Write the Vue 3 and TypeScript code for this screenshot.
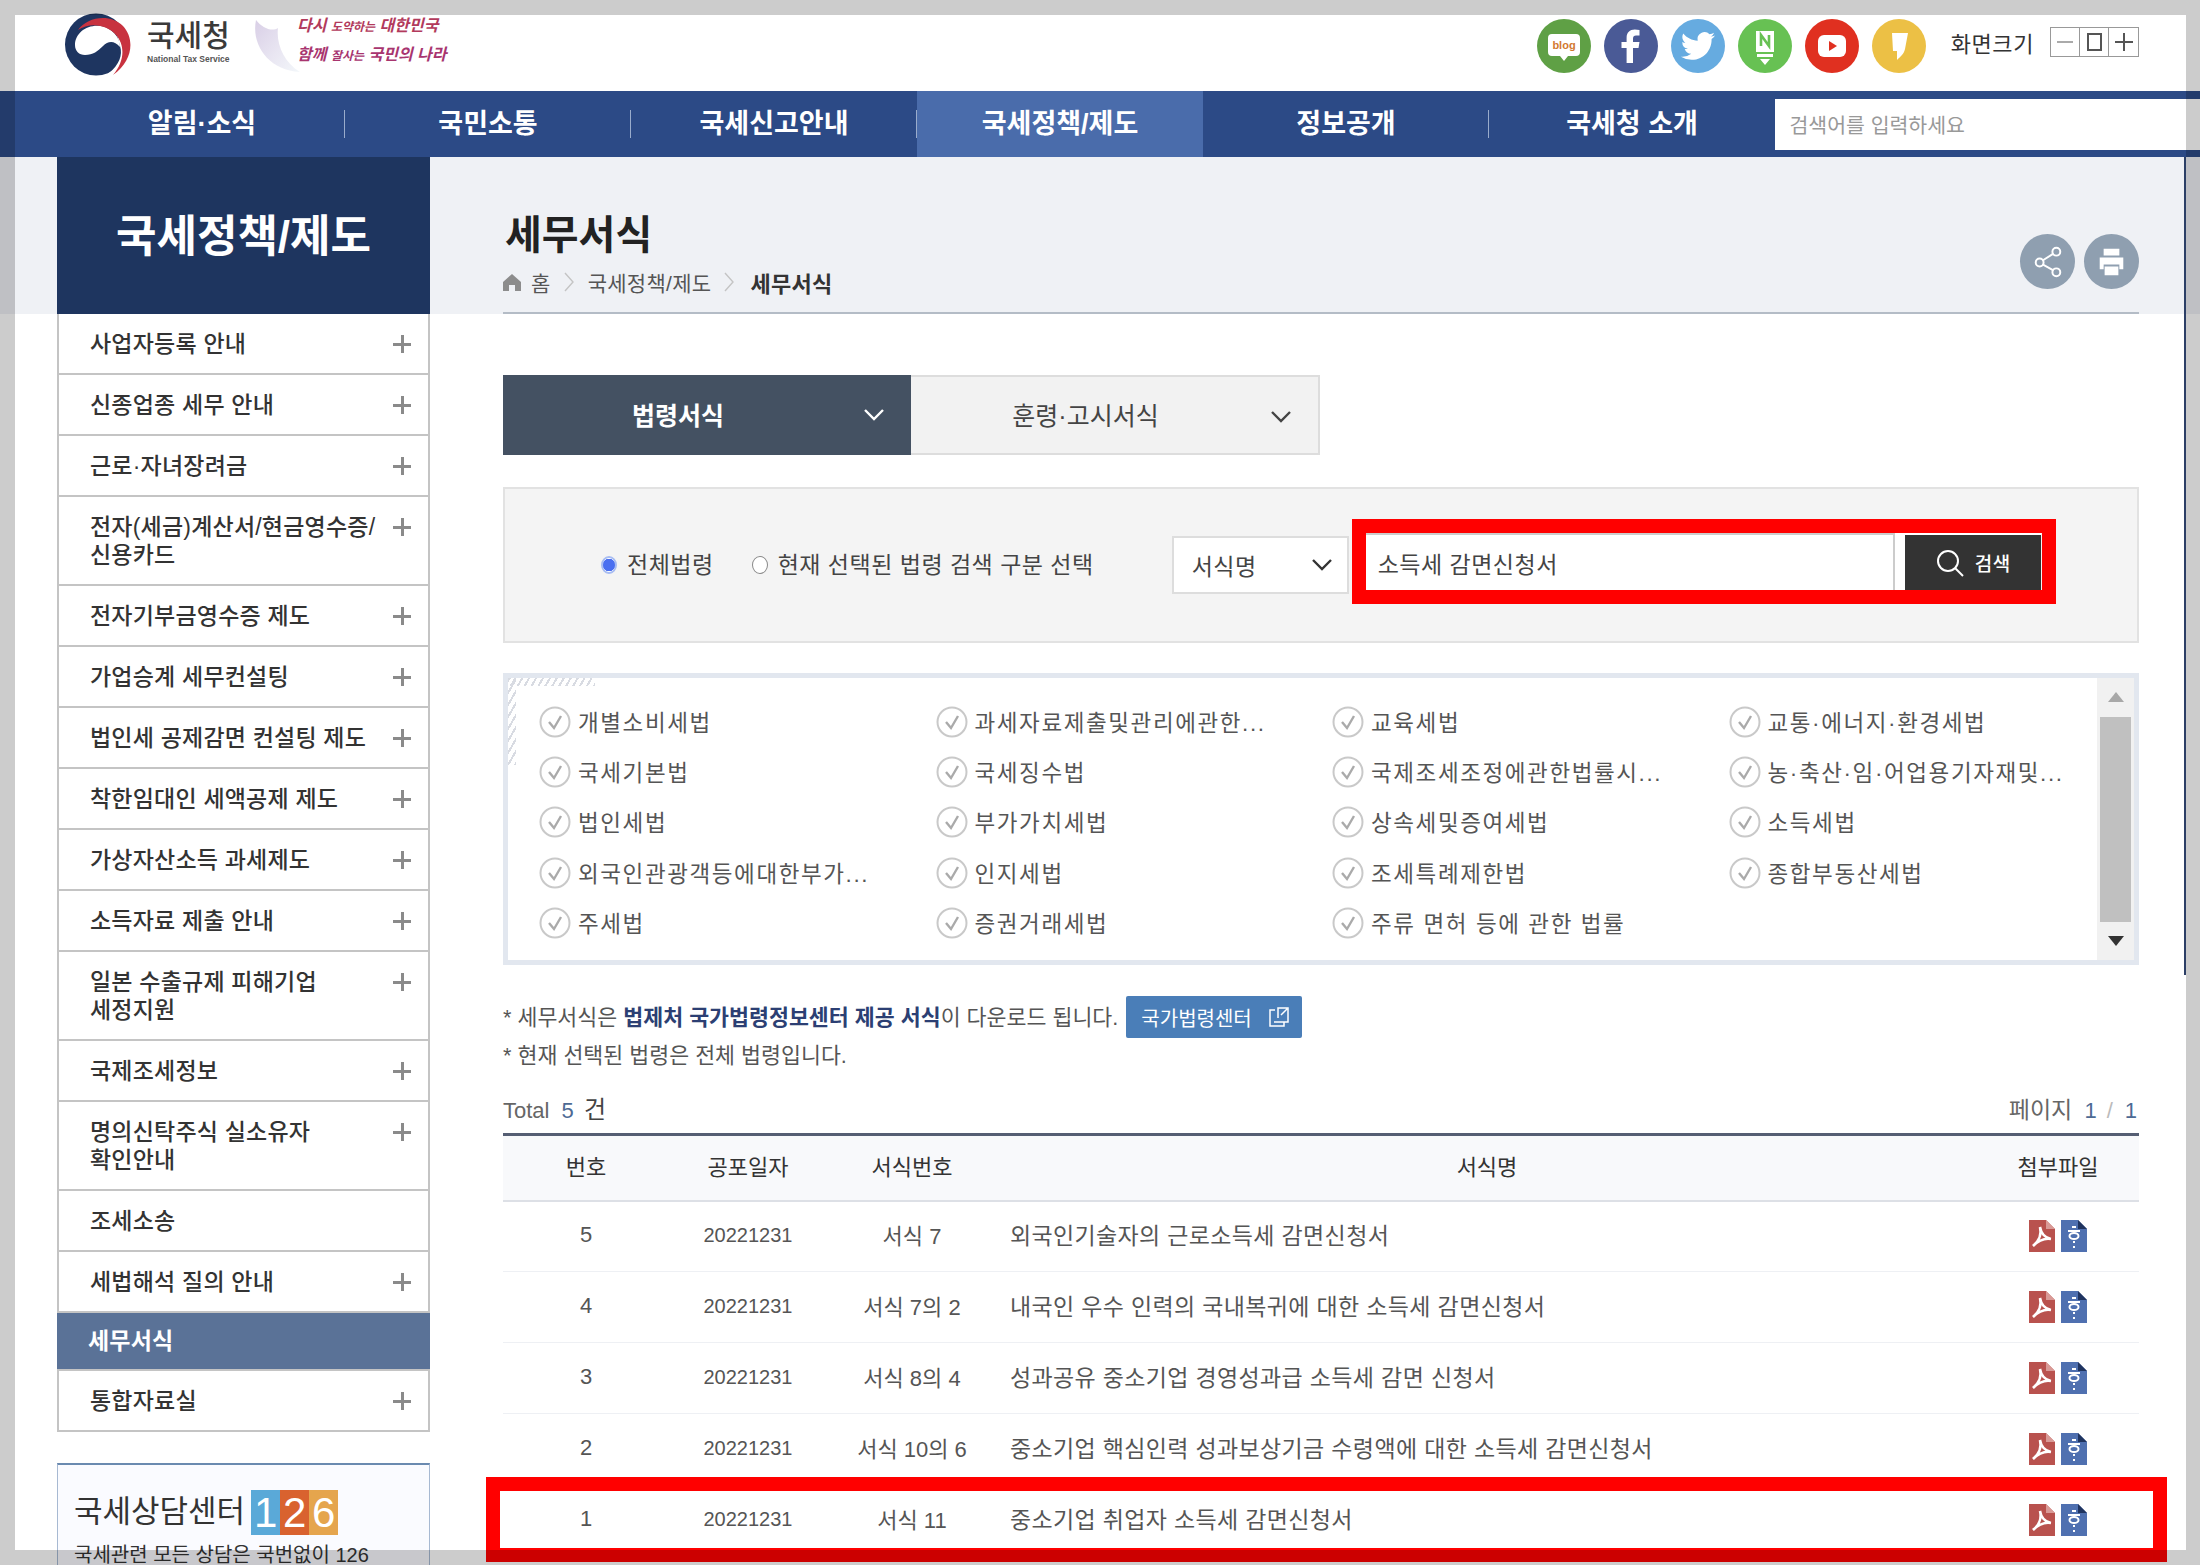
<script setup lang="ts">
type MenuItem = { label: string; plus?: boolean; active?: boolean }
type FormRow = { no: number; date: string; code: string; title: string }

const NAV = ['알림·소식', '국민소통', '국세신고안내', '국세정책/제도', '정보공개', '국세청 소개']
const ACTIVE_NAV = '국세정책/제도'

const MENU: MenuItem[] = [
  { label: '사업자등록 안내', plus: true },
  { label: '신종업종 세무 안내', plus: true },
  { label: '근로·자녀장려금', plus: true },
  { label: '전자(세금)계산서/현금영수증/\n신용카드', plus: true },
  { label: '전자기부금영수증 제도', plus: true },
  { label: '가업승계 세무컨설팅', plus: true },
  { label: '법인세 공제감면 컨설팅 제도', plus: true },
  { label: '착한임대인 세액공제 제도', plus: true },
  { label: '가상자산소득 과세제도', plus: true },
  { label: '소득자료 제출 안내', plus: true },
  { label: '일본 수출규제 피해기업\n세정지원', plus: true },
  { label: '국제조세정보', plus: true },
  { label: '명의신탁주식 실소유자\n확인안내', plus: true },
  { label: '조세소송' },
  { label: '세법해석 질의 안내', plus: true },
  { label: '세무서식', active: true },
  { label: '통합자료실', plus: true },
]

const LAWS = [
  '개별소비세법',
  '과세자료제출및관리에관한...',
  '교육세법',
  '교통·에너지·환경세법',
  '국세기본법',
  '국세징수법',
  '국제조세조정에관한법률시...',
  '농·축산·임·어업용기자재및...',
  '법인세법',
  '부가가치세법',
  '상속세및증여세법',
  '소득세법',
  '외국인관광객등에대한부가...',
  '인지세법',
  '조세특례제한법',
  '종합부동산세법',
  '주세법',
  '증권거래세법',
  '주류 면허 등에 관한 법률',
]

const ROWS: FormRow[] = [
  { no: 5, date: '20221231', code: '서식 7', title: '외국인기술자의 근로소득세 감면신청서' },
  { no: 4, date: '20221231', code: '서식 7의 2', title: '내국인 우수 인력의 국내복귀에 대한 소득세 감면신청서' },
  { no: 3, date: '20221231', code: '서식 8의 4', title: '성과공유 중소기업 경영성과급 소득세 감면 신청서' },
  { no: 2, date: '20221231', code: '서식 10의 6', title: '중소기업 핵심인력 성과보상기금 수령액에 대한 소득세 감면신청서' },
  { no: 1, date: '20221231', code: '서식 11', title: '중소기업 취업자 소득세 감면신청서' },
]
</script>

<template>
  <div class="page">
    <header class="top">
      <svg class="logo" viewBox="0 0 67 63" width="67" height="63" aria-label="국세청 로고">
        <circle cx="31" cy="31.5" r="31" fill="#1e3560" />
        <path d="M55 33 C58 42 54 52 44 60 L48 62 C62 48 60 32 52 22 Z" fill="#fff" />
        <path d="M10 32 C10 20 22 11 36 13 C47 15 55 24 55 34 C49 27 43 28 38 33 C33 38 28 42 20 42 C14 42 10 38 10 32 Z" fill="#fff" />
        <path d="M13 17 C22 4 45 0 58 13 C70 26 68 48 48 62 C60 48 60 32 51 22 C42 11 24 9 13 17 Z" fill="#c8323f" />
      </svg>
      <div class="brand">
        <div class="brand-ko">국세청</div>
        <div class="brand-en">National Tax Service</div>
      </div>
      <svg class="fan" viewBox="0 0 46 52" width="46" height="52">
        <defs>
          <linearGradient id="fan-fill" x1="0" y1="0" x2="1" y2="1">
            <stop offset="0" stop-color="#d9cfe6" />
            <stop offset="0.55" stop-color="#e9e6f2" />
            <stop offset="1" stop-color="#f3f7fa" />
          </linearGradient>
        </defs>
        <path d="M2 0 C-3 24 14 50 46 52 C30 42 22 24 24 8 C18 12 8 8 2 0 Z" fill="url(#fan-fill)" />
      </svg>
      <div class="slogan">
        <div class="slogan-line">다시 <small>도약하는</small> 대한민국</div>
        <div class="slogan-line">함께 <small>잘사는</small> 국민의 나라</div>
      </div>

      <div class="top-right">
        <div class="socials">
          <span class="social" style="background: #5fa045">
            <svg viewBox="0 0 54 54" width="54" height="54">
              <path d="M15 15 H39 Q43 15 43 19 V33 Q43 37 39 37 H31 L27 42 L23 37 H15 Q11 37 11 33 V19 Q11 15 15 15 Z" fill="#fff" />
              <text x="27" y="30" text-anchor="middle" class="blog-text">blog</text>
            </svg>
          </span>
          <span class="social" style="background: #4a5a96">
            <svg viewBox="0 0 54 54" width="54" height="54">
              <path d="M29 44 V29 H34.5 L35.5 23 H29 V19.5 C29 17.5 30 16.5 32 16.5 H35.5 V11 C34 10.8 32.4 10.6 30.8 10.6 C25.8 10.6 22.6 13.6 22.6 18.8 V23 H17.5 V29 H22.6 V44 Z" fill="#fff" />
            </svg>
          </span>
          <span class="social" style="background: #66abe0">
            <svg viewBox="-7 -7 38 38" width="54" height="54">
              <path d="M23.953 4.57a10 10 0 01-2.825.775 4.958 4.958 0 002.163-2.723c-.951.555-2.005.959-3.127 1.184a4.92 4.92 0 00-8.384 4.482C7.69 8.095 4.067 6.13 1.64 3.162a4.822 4.822 0 00-.666 2.475c0 1.71.87 3.213 2.188 4.096a4.904 4.904 0 01-2.228-.616v.06a4.923 4.923 0 003.946 4.827 4.996 4.996 0 01-2.212.085 4.936 4.936 0 004.604 3.417 9.867 9.867 0 01-6.102 2.105c-.39 0-.779-.023-1.17-.067a13.995 13.995 0 007.557 2.209c9.053 0 13.998-7.496 13.998-13.985 0-.21 0-.42-.015-.63A9.935 9.935 0 0024 4.59z" fill="#fff" />
            </svg>
          </span>
          <span class="social" style="background: #67c153">
            <svg viewBox="0 0 54 54" width="54" height="54">
              <path d="M18 12 H36 V33 H18 Z M19 35 H35 V38 H19 Z M22 40 H32 L27 46 Z" fill="#fff" />
              <path d="M23 27 V16 L31 27 V16" fill="none" stroke="#67c153" stroke-width="2.6" />
            </svg>
          </span>
          <span class="social" style="background: #e03020">
            <svg viewBox="0 0 54 54" width="54" height="54">
              <rect x="13" y="16" width="28" height="22" rx="6" fill="#fff" />
              <path d="M24 22 L32 27 L24 32 Z" fill="#e03020" />
            </svg>
          </span>
          <span class="social" style="background: #ecc045">
            <svg viewBox="0 0 54 54" width="54" height="54">
              <path d="M20 14 H36 L33 30 C32 35 28 38 25 41 L25 32 H21 Z" fill="#fff" />
            </svg>
          </span>
        </div>
        <span class="size-label">화면크기</span>
        <div class="size-box">
          <span class="size-cell"><i class="bar" /></span>
          <span class="size-cell"><i class="square" /></span>
          <span class="size-cell"><i class="cross" /></span>
        </div>
      </div>
    </header>

    <nav class="nav">
      <a v-for="n in NAV" :key="n" class="nav-item" :class="{ on: n === ACTIVE_NAV }">{{ n }}</a>
      <div class="nav-search">검색어를 입력하세요</div>
    </nav>

    <div class="main">
      <aside class="side">
        <div class="side-head">국세정책/제도</div>
        <ul class="menu">
          <li v-for="m in MENU" :key="m.label" class="menu-row" :class="{ active: m.active }">
            <span class="menu-label">{{ m.label }}</span>
            <i v-if="m.plus" class="plus" />
          </li>
        </ul>
        <div class="call">
          <div class="call-title">
            <span>국세상담센터</span>
            <span class="tiles">
              <b class="tile t1">1</b><b class="tile t2">2</b><b class="tile t3">6</b>
            </span>
          </div>
          <p class="call-text">국세관련 모든 상담은 국번없이 126</p>
        </div>
      </aside>

      <section class="content">
        <div class="title-bar">
          <div>
            <h1 class="title">세무서식</h1>
            <div class="crumbs">
              <svg viewBox="0 0 18 18" width="18" height="18">
                <path d="M9 1 L18 9 V18 H12 V12 H6 V18 H0 V9 Z" fill="#8c8c8c" />
              </svg>
              <span class="crumb">홈</span>
              <svg class="sep" viewBox="0 0 10 20" width="10" height="20"><path d="M1 1 L9 10 L1 19" fill="none" stroke="#c4c4c4" stroke-width="1.4" /></svg>
              <span class="crumb">국세정책/제도</span>
              <svg class="sep" viewBox="0 0 10 20" width="10" height="20"><path d="M1 1 L9 10 L1 19" fill="none" stroke="#c4c4c4" stroke-width="1.4" /></svg>
              <strong class="crumb now">세무서식</strong>
            </div>
          </div>
          <div class="tools">
            <span class="tool">
              <svg viewBox="0 0 56 56" width="55" height="55" fill="none" stroke="#fff" stroke-width="2">
                <path d="M23 27 L34 20 M23 31 L34 37" />
                <circle cx="20" cy="29" r="4" />
                <circle cx="37" cy="18" r="4" />
                <circle cx="37" cy="39" r="4" />
              </svg>
            </span>
            <span class="tool">
              <svg viewBox="0 0 56 56" width="55" height="55">
                <path d="M20 15 H36 V22 H20 Z M16 24 H40 V36 H36 V31 H20 V36 H16 Z M21 33 H35 V42 H21 Z" fill="#fff" />
              </svg>
            </span>
          </div>
        </div>

        <div class="tabs">
          <div class="tab on">
            <span>법령서식</span>
            <svg class="tab-chev" viewBox="0 0 20 12" width="20" height="12"><path d="M1 1 L10 10 L19 1" fill="none" stroke="#fff" stroke-width="2.4" /></svg>
          </div>
          <div class="tab">
            <span>훈령·고시서식</span>
            <svg class="tab-chev" viewBox="0 0 20 12" width="20" height="12"><path d="M1 1 L10 10 L19 1" fill="none" stroke="#444" stroke-width="2.4" /></svg>
          </div>
        </div>

        <div class="search">
          <span class="radio checked" />
          <span class="radio-label">전체법령</span>
          <span class="radio second" />
          <span class="radio-label">현재 선택된 법령 검색 구분 선택</span>
          <div class="select">
            <span>서식명</span>
            <svg viewBox="0 0 20 12" width="20" height="12"><path d="M1 1 L10 10 L19 1" fill="none" stroke="#333" stroke-width="2.4" /></svg>
          </div>
          <div class="field">
            <div class="input">소득세 감면신청서</div>
            <div class="search-btn">
              <svg viewBox="0 0 30 30" width="30" height="30" fill="none" stroke="#fff" stroke-width="2">
                <circle cx="13" cy="13" r="10" />
                <path d="M20 20 L28 28" />
              </svg>
              <span>검색</span>
            </div>
          </div>
        </div>

        <div class="laws">
          <i class="hatch hatch-top" />
          <i class="hatch hatch-left" />
          <div class="law-grid">
            <div v-for="l in LAWS" :key="l" class="law">
              <svg viewBox="0 0 32 32" width="32" height="32" fill="none">
                <circle cx="16" cy="16" r="14.5" stroke="#c9c9c9" stroke-width="2" />
                <path d="M10 16 L15 22 L22 10" stroke="#aaa" stroke-width="2.4" />
              </svg>
              <span>{{ l }}</span>
            </div>
          </div>
          <div class="scroll">
            <div class="scroll-btn"><i class="tri up" /></div>
            <div class="thumb" />
            <div class="scroll-btn"><i class="tri down" /></div>
          </div>
        </div>

        <div class="note first">
          <span>* 세무서식은 <b>법제처 국가법령정보센터 제공 서식</b>이 다운로드 됩니다.</span>
          <a class="law-link">
            국가법령센터
            <svg viewBox="0 0 20 20" width="20" height="20" fill="none" stroke="#fff" stroke-width="1.5">
              <path d="M6 3 H1 V19 H15 V15 M5 15 H19 V1 H9 V11 M12 8 L18 2" />
            </svg>
          </a>
        </div>
        <div class="note"><span>* 현재 선택된 법령은 전체 법령입니다.</span></div>

        <div class="summary">
          <span>Total <em>5</em> <span class="unit">건</span></span>
          <span><span class="page-label">페이지</span> <em>1</em><i class="slash">/</i><em>1</em></span>
        </div>

        <table class="grid">
          <colgroup>
            <col style="width: 166px" />
            <col style="width: 158px" />
            <col style="width: 170px" />
            <col />
            <col style="width: 162px" />
          </colgroup>
          <thead>
            <tr>
              <th>번호</th>
              <th>공포일자</th>
              <th>서식번호</th>
              <th>서식명</th>
              <th>첨부파일</th>
            </tr>
          </thead>
          <tbody>
            <tr v-for="r in ROWS" :key="r.no">
              <td class="num">{{ r.no }}</td>
              <td class="num date">{{ r.date }}</td>
              <td class="txt">{{ r.code }}</td>
              <td class="txt left">{{ r.title }}</td>
              <td>
                <div class="files">
                  <svg viewBox="0 0 26 32" width="26" height="32">
                    <path d="M0 0 H17 L26 9 V32 H0 Z" fill="#b9524e" />
                    <path d="M17 0 L26 9 H17 Z" fill="#d99a96" />
                    <path d="M4 26 C9 22 13 15 11 7 C12 13 16 18 22 19 C16 18 9 21 4 26 Z" fill="none" stroke="#fff" stroke-width="2.6" />
                  </svg>
                  <svg viewBox="0 0 26 32" width="26" height="32">
                    <path d="M0 0 H17 L26 9 V32 H0 Z" fill="#4f70b0" />
                    <path d="M17 0 L26 9 H17 Z" fill="#20345f" />
                    <path d="M11 7 H15 M7 11 H19 M13 21 V23 M13 26 V28" stroke="#fff" stroke-width="2" />
                    <ellipse cx="13" cy="16" rx="4.5" ry="3" fill="none" stroke="#fff" stroke-width="2" />
                  </svg>
                </div>
              </td>
            </tr>
          </tbody>
        </table>
      </section>
    </div>

    <!-- screenshot annotations and the frame on top of the page -->
    <i class="mark mark-search" />
    <i class="mark mark-row" />
    <i class="edge-line" />
    <i class="frame" />
  </div>
</template>

<style scoped>
.page {
  position: relative;
  width: 2200px;
  height: 1565px;
  overflow: hidden;
  background: #fff;
  color: #333;
  font-family: 'Liberation Sans', 'Noto Sans CJK KR', sans-serif;
}

.top {
  display: flex;
  align-items: center;
  height: 91px;
  padding: 0 61px 0 65px;
  box-sizing: border-box;
}
.logo {
  margin-top: -2px;
}
.brand {
  margin: -8px 0 0 15px;
  width: 90px;
}
.brand-ko {
  font-size: 30px;
  line-height: 34px;
  font-weight: 500;
  color: #3a3a3a;
  white-space: nowrap;
}
.brand-en {
  font-size: 8.5px;
  line-height: 12px;
  font-weight: 700;
  color: #555;
  white-space: nowrap;
}
.fan {
  margin: 0 0 0 17px;
}
.slogan {
  margin: -9px 0 0 -3px;
  color: #b23a5c;
  font-weight: 700;
  font-style: italic;
  font-size: 16px;
  line-height: 28px;
  white-space: nowrap;
}
.slogan small {
  font-size: 12px;
}
.slogan-line:last-child {
  color: #a8356f;
}
.top-right {
  display: flex;
  align-items: center;
  margin-left: auto;
}
.socials {
  display: flex;
  gap: 13px;
}
.social {
  display: block;
  width: 54px;
  height: 54px;
  border-radius: 50%;
}
.social svg {
  display: block;
}
.blog-text {
  font-size: 11px;
  font-weight: 700;
  fill: #d2782f;
}
.size-label {
  margin: -8px 16px 0 25px;
  font-size: 22px;
  letter-spacing: 0.6px;
  color: #333;
}
.size-box {
  display: flex;
  margin-top: -8px;
  height: 28px;
  border: 1px solid #999;
}
.size-cell {
  position: relative;
  display: grid;
  place-items: center;
  width: 29px;
  box-sizing: border-box;
  border-right: 1px solid #999;
}
.size-cell:last-child {
  border-right: 0;
}
.bar {
  width: 16px;
  height: 2px;
  background: #aaa;
}
.square {
  width: 11px;
  height: 14px;
  border: 2px solid #555;
}
.cross {
  width: 18px;
  height: 18px;
  background: linear-gradient(#555, #555) center / 18px 2px no-repeat, linear-gradient(#555, #555) center / 2px 18px no-repeat;
}

.nav {
  display: flex;
  align-items: center;
  height: 66px;
  padding-left: 59px;
  background: #2c4a86;
}
.nav-item {
  position: relative;
  display: flex;
  align-items: center;
  justify-content: center;
  width: 286px;
  height: 100%;
  box-sizing: border-box;
  padding-bottom: 5px;
  color: #fff;
  font-size: 27px;
  font-weight: 700;
}
.nav-item::after {
  content: '';
  position: absolute;
  right: 0;
  top: 19px;
  height: 28px;
  width: 1px;
  background: #9aaccc;
}
.nav-item:nth-last-child(2)::after,
.nav-item.on::after {
  display: none;
}
.nav-item.on {
  background: #4a6cab;
}
.nav-search {
  flex: 1;
  height: 51px;
  margin-left: -0.5px;
  padding-left: 15px;
  background: #fff;
  color: #999;
  font-size: 20.5px;
  line-height: 53px;
}

.main {
  display: flex;
  padding-left: 57px;
  background: linear-gradient(#eff1f5 157px, #fff 157px);
}
.side {
  width: 373px;
  flex: none;
}
.side-head {
  height: 157px;
  line-height: 160px;
  text-align: center;
  background: #1e355f;
  color: #fff;
  font-size: 44px;
  font-weight: 700;
}
.menu {
  margin: 0;
  padding: 0;
  list-style: none;
  border-left: 2px solid #c4c4c4;
  border-right: 2px solid #c4c4c4;
}
.menu-row {
  display: flex;
  justify-content: space-between;
  padding: 16px 17px 15px 31px;
  border-bottom: 2px solid #c4c4c4;
  font-size: 23px;
  line-height: 28px;
  font-weight: 500;
  letter-spacing: 0.2px;
  color: #333;
}
.menu-label {
  white-space: pre-line;
}
.menu-row.active {
  margin: 0 -2px;
  padding: 14px 19px 14px 31px;
  background: #5a7297;
  color: #fff;
  font-weight: 700;
}
.plus {
  flex: none;
  width: 18px;
  height: 18px;
  margin-top: 5px;
  background: linear-gradient(#8a8a8a, #8a8a8a) center / 18px 3px no-repeat, linear-gradient(#8a8a8a, #8a8a8a) center / 3px 18px no-repeat;
}
.call {
  margin-top: 31px;
  height: 130px;
  padding: 0 16px;
  box-sizing: border-box;
  background: #fafbff;
  border: 1px solid #a7b9d2;
  border-top: 2px solid #6a8ab0;
}
.call-title {
  display: flex;
  align-items: center;
  gap: 6px;
  margin-top: 24px;
  font-size: 31px;
  line-height: 46px;
  color: #333;
  white-space: nowrap;
}
.tiles {
  display: flex;
}
.tile {
  width: 29px;
  height: 45px;
  text-align: center;
  color: #fff;
  font-size: 42px;
  font-weight: 400;
  line-height: 45px;
}
.t1 {
  background: #5aa9d8;
}
.t2 {
  background: #d9622f;
}
.t3 {
  background: #e5a54d;
}
.call-text {
  margin: 7px 0 0;
  font-size: 20px;
  line-height: 26px;
  color: #333;
  white-space: nowrap;
}

.content {
  width: 1636px;
  margin-left: 73px;
}
.title-bar {
  display: flex;
  justify-content: space-between;
  align-items: flex-end;
  height: 157px;
  box-sizing: border-box;
  padding-bottom: 18px;
  border-bottom: 2px solid #b4bcc6;
}
.title {
  margin: 0 0 12px 2px;
  font-size: 40px;
  line-height: 46px;
  font-weight: 700;
  color: #222;
}
.crumbs {
  display: flex;
  align-items: center;
  height: 24px;
  font-size: 21px;
  letter-spacing: 0.3px;
  color: #555;
}
.crumb {
  margin-left: 10px;
  font-weight: 400;
}
.sep {
  margin-left: 13px;
  margin-right: 4px;
}
.now {
  margin-left: 12px;
  font-size: 22px;
  font-weight: 700;
  color: #333;
}
.tools {
  display: flex;
  gap: 9px;
  margin-bottom: 5px;
}
.tool {
  width: 55px;
  height: 55px;
  border-radius: 50%;
  background: #8f9fb0;
}
.tool svg {
  display: block;
}

.tabs {
  display: flex;
  margin-top: 61px;
}
.tab {
  position: relative;
  width: 409px;
  height: 80px;
  box-sizing: border-box;
  display: flex;
  align-items: center;
  justify-content: center;
  padding: 0 58px 3px 0;
  background: #f2f2f2;
  border: 2px solid #ddd;
  border-left: 0;
  font-size: 25px;
  color: #444;
}
.tab.on {
  width: 408px;
  background: #445162;
  border: 0;
  color: #fff;
  font-weight: 700;
}
.tab-chev {
  position: absolute;
  right: 27px;
  top: 34px;
}

.search {
  display: flex;
  align-items: center;
  height: 156px;
  margin-top: 32px;
  box-sizing: border-box;
  padding-left: 96px;
  background: #f4f4f4;
  border: 2px solid #e2e2e2;
  font-size: 23px;
  letter-spacing: 0.5px;
  color: #444;
}
.radio {
  flex: none;
  width: 16px;
  height: 18px;
  box-sizing: border-box;
  border-radius: 50%;
  background: #fff;
  border: 1.5px solid #888;
}
.radio.checked {
  border: 2px solid #a7bcf2;
  background: radial-gradient(circle, #4a6ff0 0 6px, #fff 6.5px);
}
.radio.second {
  margin-left: 38px;
}
.radio-label {
  margin: 0 0 4px 10px;
  white-space: nowrap;
}
.select {
  flex: none;
  display: flex;
  align-items: center;
  justify-content: space-between;
  width: 177px;
  height: 58px;
  margin-left: 78px;
  padding: 0 15px 0 18px;
  box-sizing: border-box;
  background: #fff;
  border: 2px solid #ddd;
  font-size: 23px;
}
.field {
  flex: none;
  display: flex;
  width: 676px;
  height: 57px;
  margin: 0 0 7px 16px;
  background: #fff;
}
.input {
  width: 530px;
  box-sizing: border-box;
  padding-left: 13px;
  border-top: 2px solid #ccc;
  border-right: 2px solid #ccc;
  font-size: 23px;
  line-height: 60px;
  color: #444;
}
.search-btn {
  display: flex;
  align-items: center;
  justify-content: center;
  gap: 10px;
  width: 136px;
  height: 55px;
  margin: 2px 0 0 10px;
  background: #333;
  color: #fff;
  font-size: 19px;
  font-weight: 500;
}

.laws {
  position: relative;
  display: flex;
  height: 292px;
  margin-top: 30px;
  box-sizing: border-box;
  border: 5px solid #e2e7ef;
}
.hatch {
  position: absolute;
  left: 0;
  top: 0;
  background: repeating-linear-gradient(-60deg, #d8dbe2 0 2px, transparent 2px 6px);
}
.hatch-top {
  width: 87px;
  height: 8px;
}
.hatch-left {
  width: 8px;
  height: 87px;
}
.law-grid {
  flex: 1;
  display: grid;
  grid-template-columns: repeat(3, 396.5px) 1fr;
  grid-auto-rows: 50.2px;
  padding: 19px 0 0 31px;
}
.law {
  display: flex;
  align-items: center;
  gap: 7px;
  font-size: 22.5px;
  letter-spacing: 1.6px;
  color: #555;
  white-space: nowrap;
}
.law span {
  margin-bottom: 2px;
}
.scroll {
  flex: none;
  display: flex;
  flex-direction: column;
  align-items: center;
  width: 37px;
  background: #f1f1f1;
}
.scroll-btn {
  flex: 1;
  display: grid;
  place-items: center;
}
.thumb {
  width: 31px;
  height: 205px;
  background: #c0c0c0;
}
.tri {
  width: 0;
  height: 0;
  border-left: 8px solid transparent;
  border-right: 8px solid transparent;
}
.tri.up {
  border-bottom: 10px solid #a8a8a8;
}
.tri.down {
  border-top: 10px solid #333;
}

.note {
  display: flex;
  align-items: center;
  height: 28px;
  margin-top: 3px;
  font-size: 21.7px;
  color: #555;
}
.note > span {
  margin-bottom: 3px;
}
.note b {
  font-weight: 700;
  color: #2c3f73;
}
.note.first {
  gap: 8px;
  height: 42px;
  margin-top: 31px;
}
.law-link {
  display: flex;
  align-items: center;
  justify-content: space-between;
  width: 176px;
  height: 42px;
  box-sizing: border-box;
  padding: 0 13px 0 15px;
  background: #4a7eb8;
  border-radius: 2px;
  color: #fff;
  font-size: 20px;
}

.summary {
  display: flex;
  justify-content: space-between;
  height: 30px;
  margin-top: 26px;
  padding-right: 2px;
  font-size: 22px;
  line-height: 30px;
  color: #666;
}
.summary em {
  font-style: normal;
  margin-left: 6px;
  color: #4d6a94;
}
.page-label {
  font-size: 23px;
}
.unit {
  margin-left: 4px;
  font-size: 24px;
  color: #444;
}
.slash {
  margin-left: 10px;
  margin-right: 6px;
  color: #bbb;
  font-style: normal;
}

.grid {
  width: 100%;
  margin-top: 8px;
  table-layout: fixed;
  border-collapse: collapse;
  border-top: 3px solid #555e73;
  font-size: 22px;
  color: #555;
}
.grid th {
  height: 66px;
  box-sizing: border-box;
  padding: 0 0 6px;
  background: #f8f9fb;
  border-bottom: 2px solid #dde0e6;
  font-size: 22px;
  font-weight: 400;
  color: #333;
}
.grid td {
  height: 71px;
  box-sizing: border-box;
  padding: 0;
  text-align: center;
  border-bottom: 1px solid #eef0f4;
}
.grid td.txt {
  padding-bottom: 5px;
}
.grid td.num {
  padding-bottom: 2px;
}
.grid td.date {
  font-size: 20px;
}
.grid td.left {
  padding-left: 13px;
  text-align: left;
  font-size: 23px;
  letter-spacing: 0.35px;
  white-space: nowrap;
}
.files {
  display: flex;
  justify-content: center;
  gap: 6px;
}

.mark {
  position: absolute;
  box-sizing: border-box;
  border: 14px solid #f00;
}
.mark-search {
  left: 1352px;
  top: 519px;
  width: 704px;
  height: 85px;
}
.mark-row {
  left: 486px;
  top: 1477px;
  width: 1681px;
  height: 85px;
}
.edge-line {
  position: absolute;
  left: 2184px;
  top: 157px;
  width: 2px;
  height: 818px;
  background: #2c3f66;
}
.frame {
  position: absolute;
  inset: 0;
  border-style: solid;
  border-width: 15px 14px 15px 15px;
  border-color: rgba(0, 0, 0, 0.2);
  pointer-events: none;
}
</style>
